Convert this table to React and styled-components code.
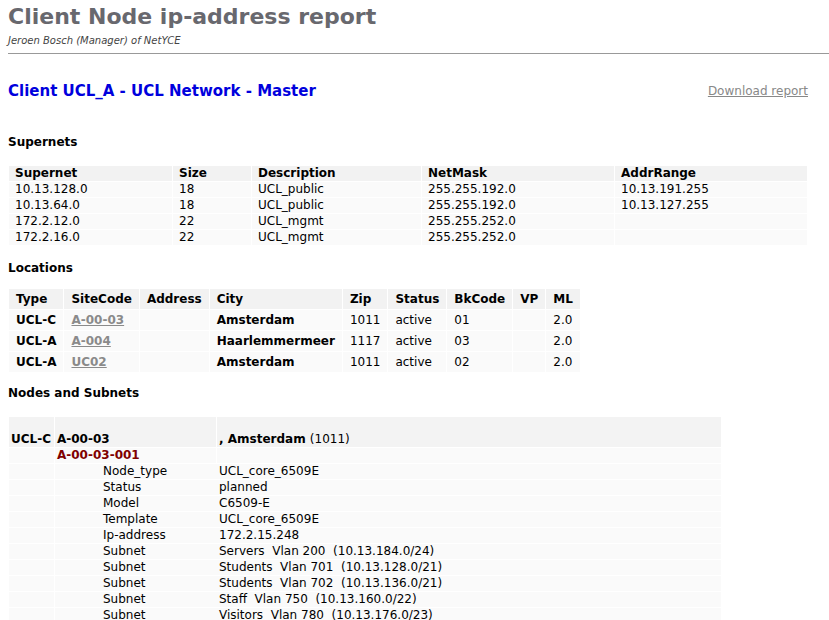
import React from "react";
import styled, { createGlobalStyle } from "styled-components";

const Global = createGlobalStyle`
  * { box-sizing: border-box; }
  html, body { margin: 0; padding: 0; background: #fff; }
  body { font-family: "DejaVu Sans", Verdana, sans-serif; font-size: 12px; color: #000; }
`;

const Page = styled.div`
  padding: 3px 0 0 8px;
`;

const Title = styled.h1`
  margin: 0;
  font-size: 22px;
  line-height: 28px;
  font-weight: bold;
  color: #68686e;
`;

const Subtitle = styled.div`
  margin-top: 4px;
  font-size: 10px;
  line-height: 12px;
  font-style: italic;
  color: #444;
`;

const Rule = styled.div`
  margin-top: 6px;
  height: 1px;
  border-top: 1px solid #999;
`;

const Content = styled.div`
  width: 800px;
`;

const ClientBar = styled.div`
  margin-top: 27px;
  display: flex;
  align-items: center;
  justify-content: space-between;
  height: 20px;
`;

const ClientTitle = styled.h2`
  margin: 0;
  font-size: 15px;
  line-height: 20px;
  font-weight: bold;
  color: #0000dd;
`;

const DownloadLink = styled.a`
  font-size: 12px;
  color: #888;
  text-decoration: underline;
  cursor: pointer;
`;

const SectionTitle = styled.h3`
  margin: ${(p) => p.$mt}px 0 0 0;
  font-size: 12px;
  line-height: 15px;
  font-weight: bold;
`;

const Table = styled.table`
  margin-top: ${(p) => p.$mt}px;
  border-collapse: separate;
  border-spacing: ${(p) => p.$spacing || "1px"};
  width: ${(p) => p.$width || "auto"};
  table-layout: ${(p) => (p.$fixed ? "fixed" : "auto")};
  font-size: 12px;
`;

const Th = styled.th`
  background: #f2f2f2;
  text-align: left;
  font-weight: bold;
  padding: ${(p) => p.$pad || "0 6px"};
  line-height: 15px;
  white-space: nowrap;
`;

const Td = styled.td`
  background: #fafafa;
  padding: ${(p) => p.$pad || "0 6px"};
  line-height: 15px;
  font-weight: ${(p) => (p.$bold ? "bold" : "normal")};
  white-space: nowrap;
  vertical-align: ${(p) => p.$valign || "middle"};
`;

const SiteLink = styled.a`
  color: #8a8a8a;
  font-weight: bold;
  text-decoration: underline;
`;

const HeadCell = styled.td`
  background: #f3f3f3;
  padding: 15px 2px 0 2px;
  line-height: 15px;
  font-weight: bold;
  vertical-align: bottom;
  white-space: nowrap;
`;

const Normal = styled.span`
  font-weight: normal;
`;

const NodeName = styled.span`
  color: #800000;
  font-weight: bold;
`;

const AttrRow = styled.div`
  display: grid;
  grid-template-columns: 116px 1fr;
  margin-left: 46px;
  white-space: pre;
`;

const supernets = [
  ["10.13.128.0", "18", "UCL_public", "255.255.192.0", "10.13.191.255"],
  ["10.13.64.0", "18", "UCL_public", "255.255.192.0", "10.13.127.255"],
  ["172.2.12.0", "22", "UCL_mgmt", "255.255.252.0", ""],
  ["172.2.16.0", "22", "UCL_mgmt", "255.255.252.0", ""],
];

const locations = [
  ["UCL-C", "A-00-03", "", "Amsterdam", "1011", "active", "01", "", "2.0"],
  ["UCL-A", "A-004", "", "Haarlemmermeer", "1117", "active", "03", "", "2.0"],
  ["UCL-A", "UC02", "", "Amsterdam", "1011", "active", "02", "", "2.0"],
];

const attrs = [
  ["Node_type", "UCL_core_6509E"],
  ["Status", "planned"],
  ["Model", "C6509-E"],
  ["Template", "UCL_core_6509E"],
  ["Ip-address", "172.2.15.248"],
  ["Subnet", "Servers  Vlan 200  (10.13.184.0/24)"],
  ["Subnet", "Students  Vlan 701  (10.13.128.0/21)"],
  ["Subnet", "Students  Vlan 702  (10.13.136.0/21)"],
  ["Subnet", "Staff  Vlan 750  (10.13.160.0/22)"],
  ["Subnet", "Visitors  Vlan 780  (10.13.176.0/23)"],
];

const supCols = [163, 78, 169, 192, 192];
const supHeads = ["Supernet", "Size", "Description", "NetMask", "AddrRange"];
const locHeads = ["Type", "SiteCode", "Address", "City", "Zip", "Status", "BkCode", "VP", "ML"];
const LOC_PAD = "3px 7px 2px";

export default function App() {
  return (
    <Page>
      <Global />
      <Title>Client Node ip-address report</Title>
      <Subtitle>Jeroen Bosch (Manager) of NetYCE</Subtitle>
      <Rule />
      <Content>
        <ClientBar>
          <ClientTitle>Client UCL_A - UCL Network - Master</ClientTitle>
          <DownloadLink>Download report</DownloadLink>
        </ClientBar>

        <SectionTitle $mt={34}>Supernets</SectionTitle>
        <Table $mt={15} $width="100%" $fixed>
          <colgroup>
            {supCols.map((w, i) => (
              <col key={i} style={{ width: w }} />
            ))}
          </colgroup>
          <thead>
            <tr>
              {supHeads.map((h) => (
                <Th key={h}>{h}</Th>
              ))}
            </tr>
          </thead>
          <tbody>
            {supernets.map((r, i) => (
              <tr key={i}>
                {r.map((c, j) => (
                  <Td key={j}>{c}</Td>
                ))}
              </tr>
            ))}
          </tbody>
        </Table>

        <SectionTitle $mt={15}>Locations</SectionTitle>
        <Table $mt={12}>
          <thead>
            <tr>
              {locHeads.map((h) => (
                <Th key={h} $pad={LOC_PAD}>{h}</Th>
              ))}
            </tr>
          </thead>
          <tbody>
            {locations.map((r, i) => (
              <tr key={i}>
                <Td $pad={LOC_PAD} $bold>{r[0]}</Td>
                <Td $pad={LOC_PAD}><SiteLink>{r[1]}</SiteLink></Td>
                <Td $pad={LOC_PAD}>{r[2]}</Td>
                <Td $pad={LOC_PAD} $bold>{r[3]}</Td>
                <Td $pad={LOC_PAD}>{r[4]}</Td>
                <Td $pad={LOC_PAD}>{r[5]}</Td>
                <Td $pad={LOC_PAD}>{r[6]}</Td>
                <Td $pad={LOC_PAD}>{r[7]}</Td>
                <Td $pad={LOC_PAD}>{r[8]}</Td>
              </tr>
            ))}
          </tbody>
        </Table>

        <SectionTitle $mt={13}>Nodes and Subnets</SectionTitle>
        <Table $mt={15} $width="714px" $spacing="1px">
          <colgroup>
            <col />
            <col style={{ width: 161 }} />
            <col />
          </colgroup>
          <tbody>
            <tr>
              <HeadCell style={{ width: 45 }}>UCL-C</HeadCell>
              <HeadCell>A-00-03</HeadCell>
              <HeadCell>
                , Amsterdam <Normal>(1011)</Normal>
              </HeadCell>
            </tr>
            <tr>
              <Td $pad="0 2px"></Td>
              <Td $pad="0 2px"><NodeName>A-00-03-001</NodeName></Td>
              <Td $pad="0 2px"></Td>
            </tr>
            {attrs.map(([k, v], i) => (
              <tr key={i}>
                <Td $pad="0 2px"></Td>
                <Td $pad="0 2px" colSpan={2}>
                  <AttrRow>
                    <span>{k}</span>
                    <span>{v}</span>
                  </AttrRow>
                </Td>
              </tr>
            ))}
          </tbody>
        </Table>
      </Content>
    </Page>
  );
}
